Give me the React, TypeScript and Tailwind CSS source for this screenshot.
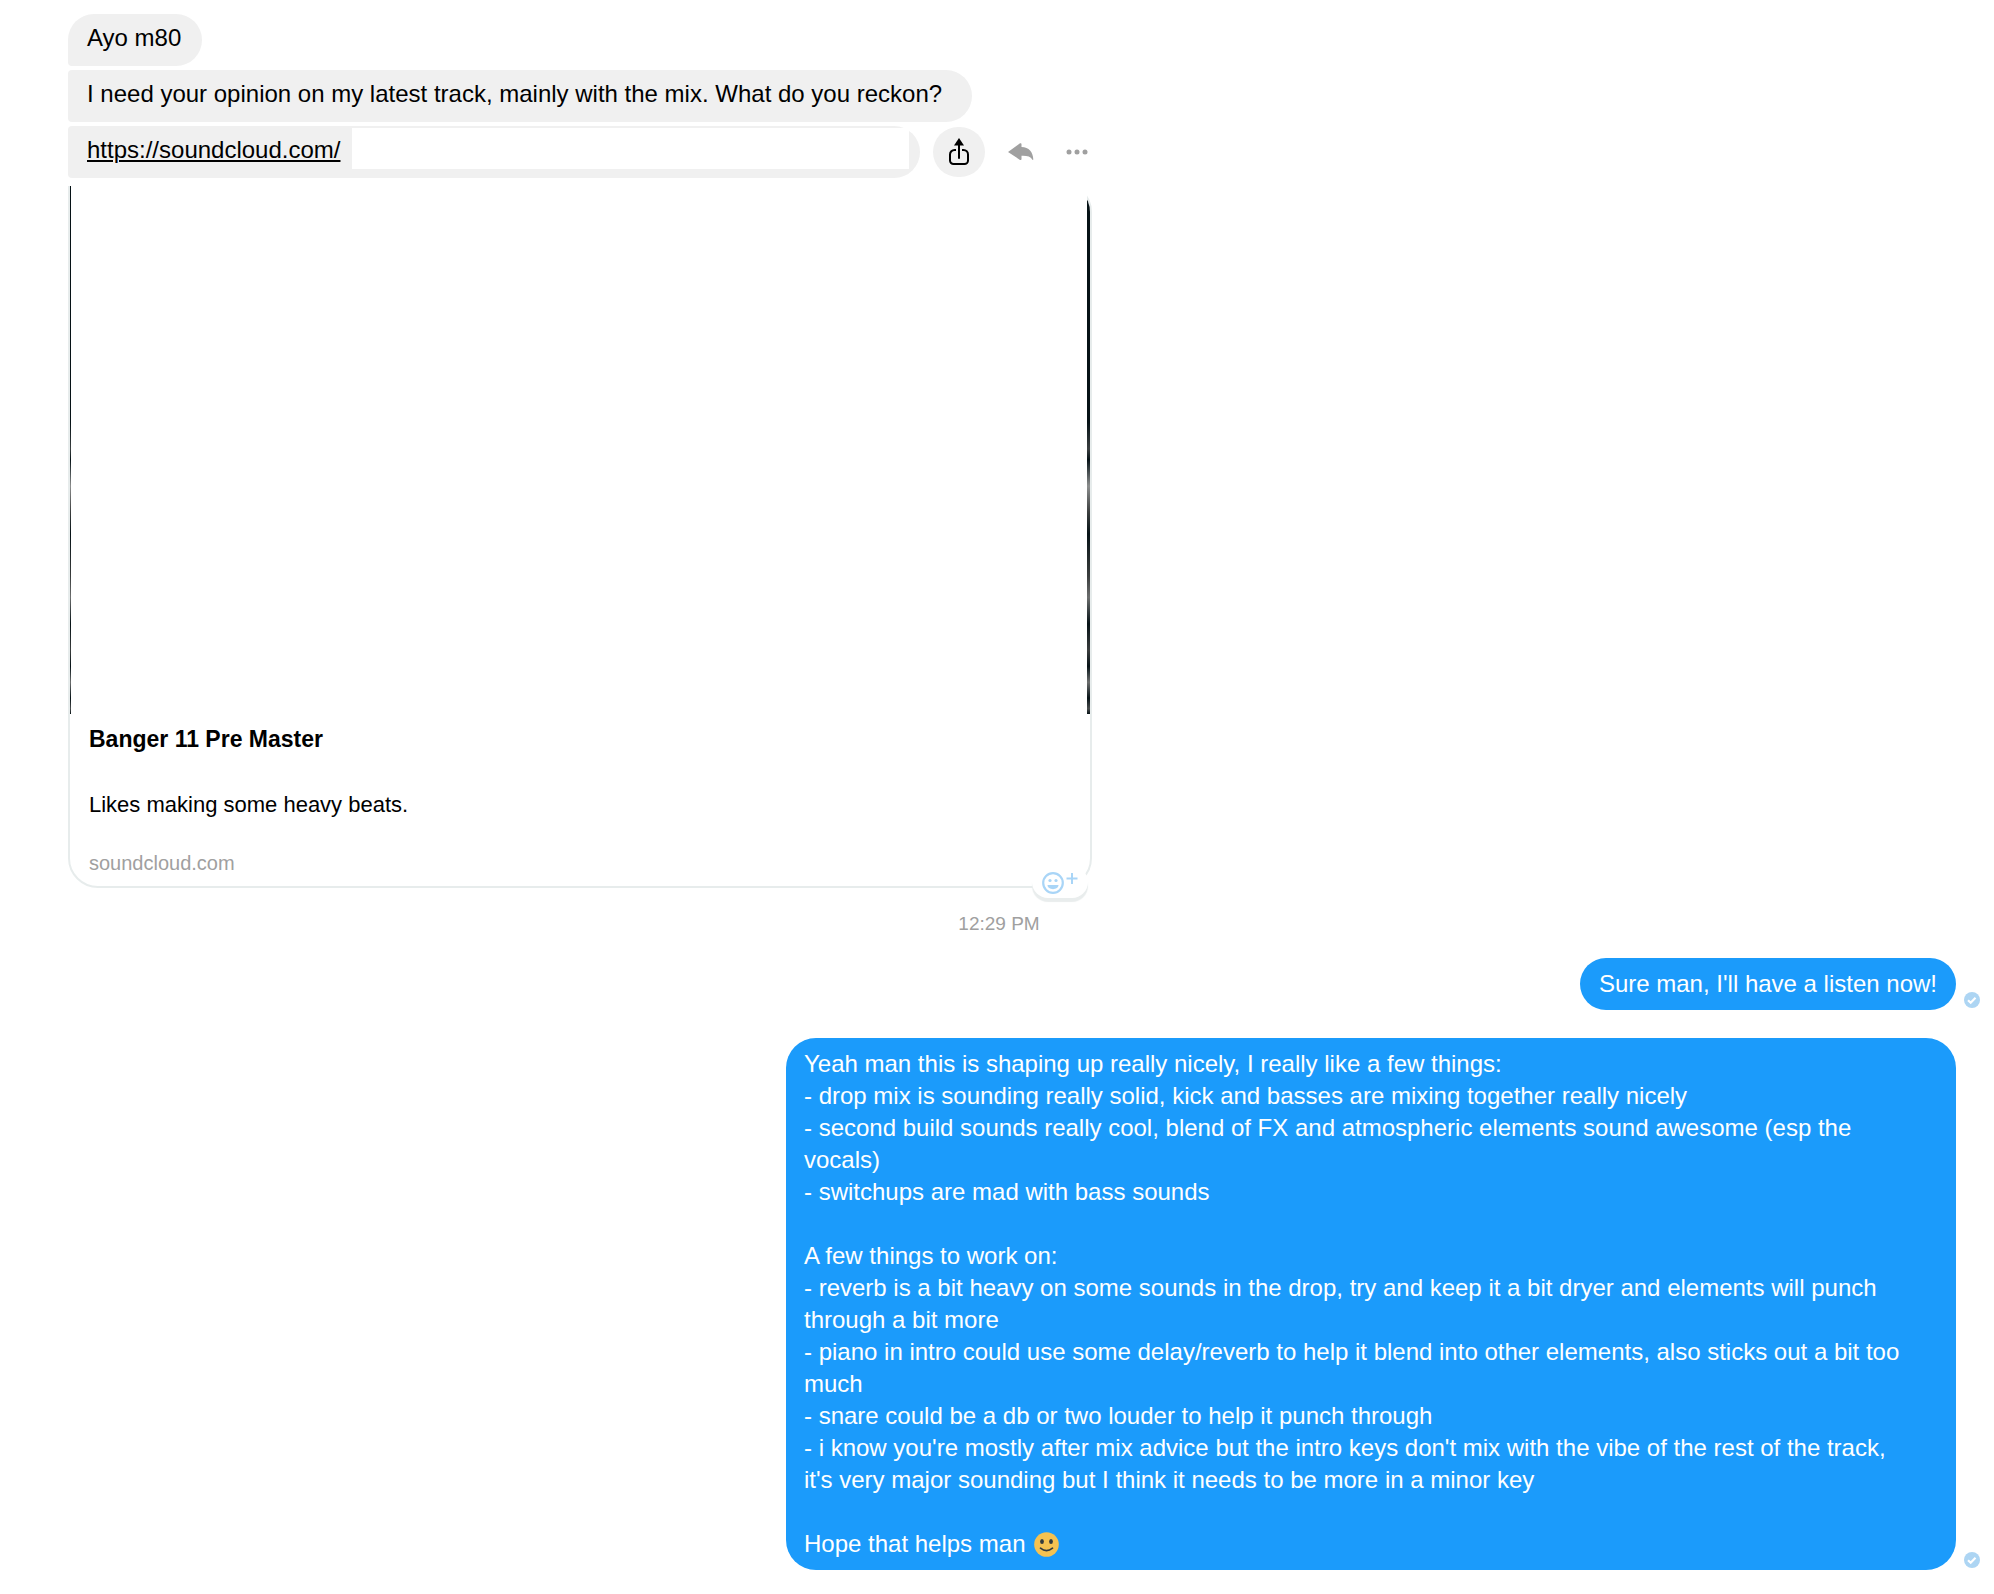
import React from "react";

const FEEDBACK = `Yeah man this is shaping up really nicely, I really like a few things:
- drop mix is sounding really solid, kick and basses are mixing together really nicely
- second build sounds really cool, blend of FX and atmospheric elements sound awesome (esp the vocals)
- switchups are mad with bass sounds

A few things to work on:
- reverb is a bit heavy on some sounds in the drop, try and keep it a bit dryer and elements will punch through a bit more
- piano in intro could use some delay/reverb to help it blend into other elements, also sticks out a bit too much
- snare could be a db or two louder to help it punch through
- i know you're mostly after mix advice but the intro keys don't mix with the vibe of the rest of the track, it's very major sounding but I think it needs to be more in a minor key

Hope that helps man `;

function ShareIcon() {
  return (
    <svg width="20" height="28" viewBox="0 0 20 28" fill="none" aria-hidden="true">
      <path d="M7 12H5.500a4.500 4.500 0 0 0-4.500 4.500v6a3.500 3.500 0 0 0 3.500 3.500h11a3.500 3.500 0 0 0 3.500-3.500v-6a4.500 4.500 0 0 0-4.500-4.500H13" stroke="#000" strokeWidth="2" />
      <path d="M10 20V6" stroke="#000" strokeWidth="2" strokeLinecap="round" />
      <path d="M10 0 15 7.500H5Z" fill="#000" />
    </svg>
  );
}

function ReplyIcon() {
  return (
    <svg width="26" height="18" viewBox="0 0 26 18" aria-hidden="true">
      <path d="M0 9 12 .3Q13.500-.3 13.500 1.200V4C21 4.200 25 9 25.300 16.500Q25 17.500 24.300 16.400C22.500 13.500 19 12.600 13.500 12.800V16Q13.500 17.600 12 16.900Z" fill="#a0a0a0" />
    </svg>
  );
}

function DotsIcon() {
  return (
    <svg width="22" height="6" viewBox="0 0 22 6" fill="#a0a0a0" aria-hidden="true">
      <circle cx="3" cy="3" r="2.500" />
      <circle cx="11" cy="3" r="2.500" />
      <circle cx="19" cy="3" r="2.500" />
    </svg>
  );
}

function AddReactionIcon() {
  return (
    <svg width="36" height="24" viewBox="0 0 36 24" fill="none" aria-hidden="true">
      <circle cx="11" cy="13" r="9.800" stroke="#a9d5f7" strokeWidth="2.200" />
      <circle cx="8" cy="10.500" r="1.600" fill="#a9d5f7" />
      <circle cx="14" cy="10.500" r="1.600" fill="#a9d5f7" />
      <path d="M5.500 15h11c0 5.500-11 5.500-11 0Z" fill="#a9d5f7" />
      <path d="M30 3v11M24.500 8.500h11" stroke="#a9d5f7" strokeWidth="2" />
    </svg>
  );
}

function SentIcon() {
  return (
    <svg className="mb-0.5 shrink-0" width="16" height="16" viewBox="0 0 16 16" role="img" aria-label="Sent">
      <circle cx="8" cy="8" r="8" fill="#add5f3" />
      <path d="m4 8.200 2.700 2.500L11.500 5.800" fill="none" stroke="#fff" strokeWidth="2.200" />
    </svg>
  );
}

function SmileEmoji() {
  return (
    <svg className="ml-0.5 inline-block align-[-5px]" width="25" height="25" viewBox="0 0 25 25" role="img" aria-label="slightly smiling face">
      <circle cx="12.500" cy="12.500" r="12.300" fill="#f5c251" />
      <ellipse cx="8" cy="9.500" rx="1.900" ry="2.500" fill="#333b3e" />
      <ellipse cx="17" cy="9.500" rx="1.900" ry="2.500" fill="#333b3e" />
      <path d="M6.500 16.200q6 4.800 12 0" fill="none" stroke="#333b3e" strokeWidth="1.700" strokeLinecap="round" />
    </svg>
  );
}

function LinkCard() {
  return (
    <article className="relative w-full max-w-[1024px] rounded-[30px] rounded-tl-sm border-2 border-[#e7ecec]">
      <div className="relative">
        <div className="aspect-[1020/530] rounded-tr-[28px] bg-[linear-gradient(#061216_45%,#3a3f40_50%,#061216_52%,#8c8e8e_57%,#3a3d3d_62%,#061216_66%,#3a3d3d_74%,#6c6e6e_78%,#061216_83%,#3a3d3d_88%,#061216_91%,#6c6e6e_94%,#061216_97%,#4a4d4d_99%,#061216)]" />
        <div className="absolute -top-0.5 bottom-0 left-px right-[3px] bg-white" />
        <div className="absolute -top-0.5 -left-0.5 h-1 w-2 bg-white" />
      </div>
      <div className="px-[19px] pb-[11px] pt-[11px] text-[22px] leading-7">
        <h2 className="text-[23px] font-bold">Banger 11 Pre Master</h2>
        <p className="mt-[38px]">Likes making some heavy beats.</p>
        <p className="mt-8 text-[20px] leading-6 text-[#a0a0a0]">soundcloud.com</p>
      </div>
      <button type="button" aria-label="Add reaction" className="absolute -bottom-3 right-0.5 flex h-8 w-[56px] items-end justify-center rounded-full bg-white pb-1 shadow-[0_4px_1px_#e9eded]">
        <AddReactionIcon />
      </button>
    </article>
  );
}

export default function App() {
  return (
    <main className="min-h-screen bg-white pb-6 pl-[68px] pr-3.5 pt-3.5 font-['Liberation_Sans',sans-serif] text-2xl leading-8 text-black">
      <section className="flex flex-col items-start gap-1">
        <p className="min-w-[134px] rounded-[26px] rounded-bl-sm bg-[#f0f0f0] px-[19px] pb-3 pt-2">Ayo m80</p>
        <p className="min-w-[904px] rounded-l-sm rounded-r-[26px] bg-[#f0f0f0] px-[19px] pb-3 pt-2">I need your opinion on my latest track, mainly with the mix. What do you reckon?</p>
        <div className="flex items-center">
          <div className="flex w-[852px] rounded-l-sm rounded-r-[26px] bg-[#f0f0f0] pl-[19px] pr-[11px]">
            <a href="https://soundcloud.com/" className="pb-3 pt-2 underline decoration-2 underline-offset-2">https://soundcloud.com/</a>
            <span className="mb-[9px] ml-3 mt-0.5 grow bg-white" />
          </div>
          <button type="button" aria-label="Share" className="ml-[13px] flex h-[50px] w-[52px] items-center justify-center rounded-full bg-[#f0f0f0]"><ShareIcon /></button>
          <button type="button" aria-label="Reply" className="ml-[23px]"><ReplyIcon /></button>
          <button type="button" aria-label="More" className="ml-8"><DotsIcon /></button>
        </div>
        <LinkCard />
      </section>
      <time className="mr-[50px] mt-6 block text-center text-[19px] leading-6 text-[#a0a0a0]">12:29 PM</time>
      <section className="mt-[22px] flex flex-col gap-7 text-white">
        <div className="flex items-end justify-end gap-2">
          <p className="rounded-[26px] bg-[#1b9bfb] px-[19px] py-2.5">Sure man, I'll have a listen now!</p>
          <SentIcon />
        </div>
        <div className="flex items-end justify-end gap-2">
          <p className="max-w-[1170px] whitespace-pre-wrap rounded-[30px] bg-[#1b9bfb] py-2.5 pl-[18px] pr-12">{FEEDBACK}<SmileEmoji /></p>
          <SentIcon />
        </div>
      </section>
    </main>
  );
}
